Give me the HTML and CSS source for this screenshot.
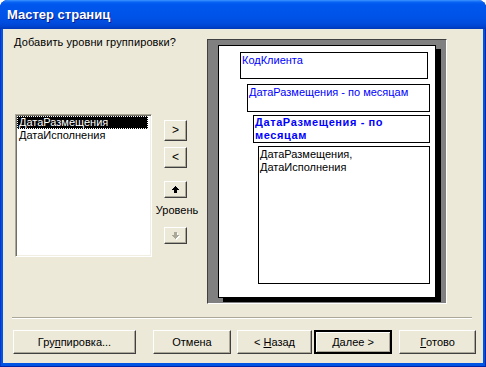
FILE: index.html
```html
<!DOCTYPE html>
<html lang="ru">
<head>
<meta charset="utf-8">
<title>Мастер страниц</title>
<link rel="stylesheet" href="styles.css">
</head>
<body>
<div class="window">
  <div class="titlebar"><span class="title">Мастер страниц</span></div>
  <div class="client">
    <div class="main">
      <div class="left">
        <div class="prompt">Добавить уровни группировки?</div>
        <div class="listbox">
          <div class="item selected">ДатаРазмещения</div>
          <div class="item">ДатаИсполнения</div>
        </div>
      </div>
      <div class="mid">
        <button class="btn small b-add">&gt;</button>
        <button class="btn small b-remove">&lt;</button>
        <button class="btn arrow b-up">
          <svg width="7" height="7" viewBox="0 0 7 7" shape-rendering="crispEdges"><rect x="3" y="0" width="1" height="1"/><rect x="2" y="1" width="3" height="1"/><rect x="1" y="2" width="5" height="1"/><rect x="0" y="3" width="7" height="1"/><rect x="2" y="4" width="3" height="3"/></svg>
        </button>
        <div class="level">Уровень</div>
        <button class="btn arrow b-down" disabled>
          <svg width="8" height="8" viewBox="0 0 8 8" shape-rendering="crispEdges"><g fill="#fff" transform="translate(1,1)"><rect x="2" y="0" width="3" height="3"/><rect x="0" y="3" width="7" height="1"/><rect x="1" y="4" width="5" height="1"/><rect x="2" y="5" width="3" height="1"/><rect x="3" y="6" width="1" height="1"/></g><g fill="#ACA899"><rect x="2" y="0" width="3" height="3"/><rect x="0" y="3" width="7" height="1"/><rect x="1" y="4" width="5" height="1"/><rect x="2" y="5" width="3" height="1"/><rect x="3" y="6" width="1" height="1"/></g></svg>
        </button>
      </div>
      <div class="preview">
        <div class="page">
          <div class="box box1 blue">КодКлиента</div>
          <div class="box box2 blue">ДатаРазмещения - по месяцам</div>
          <div class="box box3 blue bold">ДатаРазмещения - по месяцам</div>
          <div class="box box4">ДатаРазмещения,<br>ДатаИсполнения</div>
        </div>
      </div>
    </div>
    <div class="sep"></div>
    <div class="buttons">
      <button class="btn wbtn b-group">Гру<u>п</u>пировка...</button>
      <button class="btn wbtn b-cancel">Отмена</button>
      <button class="btn wbtn b-back">&lt;&nbsp;<u>Н</u>азад</button>
      <button class="btn wbtn b-next default"><u>Д</u>алее&nbsp;&gt;</button>
      <button class="btn wbtn b-done"><u>Г</u>отово</button>
    </div>
  </div>
</div>
</body>
</html>
```

FILE: styles.css
```css
* { box-sizing: border-box; }
html, body { margin: 0; padding: 0; background: #fff; }
body { font-family: "Liberation Sans", Arial, sans-serif; font-size: 11px; line-height: 13px; color: #000; }

.window {
  width: 486px;
  height: 367px;
  background: #0054E3;
  border-radius: 8px 8px 0 0;
  display: flex;
  flex-direction: column;
  box-shadow: inset -1px -1px 0 #0024A8, inset 1px 0 0 #0036C8;
}

.titlebar {
  height: 29px;
  flex: none;
  border-radius: 8px 8px 0 0;
  background: linear-gradient(180deg, #3D95FF 0px, #0A66F5 2px, #0058EE 4px, #0055EB 10px, #0052E6 18px, #004CDD 23px, #0045D2 26px, #0038B8 29px);
  padding: 6px 0 0 7px;
}
.title {
  font-family: "Liberation Sans", Arial, sans-serif;
  font-weight: bold;
  font-size: 13px;
  line-height: 17px;
  color: #fff;
  text-shadow: 1px 1px 0 #0A1A8A;
}

.client {
  flex: 1;
  margin: 0 3px 4px 3px;
  background: #ECE9D8;
  display: flex;
  flex-direction: column;
}

.main {
  height: 275px;
  flex: none;
  display: flex;
  padding: 7px 0 0 11px;
}

.left { width: 138px; flex: none; }
.prompt { white-space: nowrap; letter-spacing: 0.1px; }
.listbox {
  margin: 65px 0 0 1px;
  width: 137px;
  height: 143px;
  background: #fff;
  border: 1px solid;
  border-color: #ACA899 #fff #fff #ACA899;
  box-shadow: inset 1px 1px 0 #716F64, inset -1px -1px 0 #F1EFE2;
  padding: 1px;
}
.item { height: 13px; padding-left: 2px; white-space: nowrap; }
.item.selected {
  background: #000;
  color: #fff;
  outline: 1px dotted #fff;
  outline-offset: -1px;
  margin-right: 2px;
}

.mid {
  width: 55px;
  flex: none;
  display: flex;
  flex-direction: column;
  align-items: center;
  padding-right: 8px;
}

.btn {
  font-family: inherit;
  font-size: 11px;
  line-height: 13px;
  color: #000;
  background: #ECE9D8;
  border: 1px solid;
  border-color: #fff #404040 #404040 #fff;
  box-shadow: inset -1px -1px 0 #ACA899;
  padding: 0;
  margin: 0;
  display: flex;
  align-items: center;
  justify-content: center;
}
.btn u { text-decoration: underline; }
.small { width: 23px; height: 21px; font-size: 12px; padding-bottom: 1px; }
.b-add { margin-top: 84px; }
.b-remove { margin-top: 6px; }
.arrow { width: 23px; height: 17px; }
.b-up { margin-top: 13px; }
.b-up svg { fill: #000; }
.level { margin-top: 6px; padding-left: 3px; white-space: nowrap; }
.b-down { margin-top: 10px; }
.b-down svg { margin: 1px 0 0 1px; }

.preview {
  margin-top: 3px;
  width: 240px;
  height: 265px;
  flex: none;
  background: #808080;
  border: 1px solid;
  border-color: #404040 #fff #fff #404040;
  padding: 5px 0 0 10px;
}
.page {
  width: 218px;
  height: 253px;
  background: #fff;
  border: 1px solid #000;
  box-shadow: 5px 4px 0 #000;
  display: flex;
  flex-direction: column;
  align-items: flex-start;
}
.box {
  border: 1px solid #000;
  padding: 1px;
  flex: none;
}
.blue { color: #0000FF; }
.bold { font-weight: bold; letter-spacing: 0.6px; }
.box1 { margin: 6px 0 0 21px; width: 188px; height: 27px; }
.box2 { margin: 5px 0 0 28px; width: 183px; height: 28px; }
.box3 { margin: 3px 0 0 34px; width: 177px; height: 28px; padding-top: 0; }
.box4 { margin: 3px 0 0 39px; width: 172px; height: 138px; }

.sep {
  margin: 13px 0 0 9px;
  width: 460px;
  height: 2px;
  border-top: 1px solid #ACA899;
  border-bottom: 1px solid #fff;
}

.buttons {
  margin-top: 11px;
  padding-left: 10px;
  display: flex;
}
.wbtn { height: 24px; }
.b-group { width: 123px; }
.b-cancel { width: 78px; margin-left: 17px; }
.b-back { width: 75px; margin-left: 6px; }
.b-next { width: 78px; margin-left: 2px; }
.b-done { width: 77px; margin-left: 7px; }
.default {
  border: 2px solid #000;
  box-shadow: inset 1px 1px 0 #fff, inset -1px -1px 0 #ACA899;
}
```
